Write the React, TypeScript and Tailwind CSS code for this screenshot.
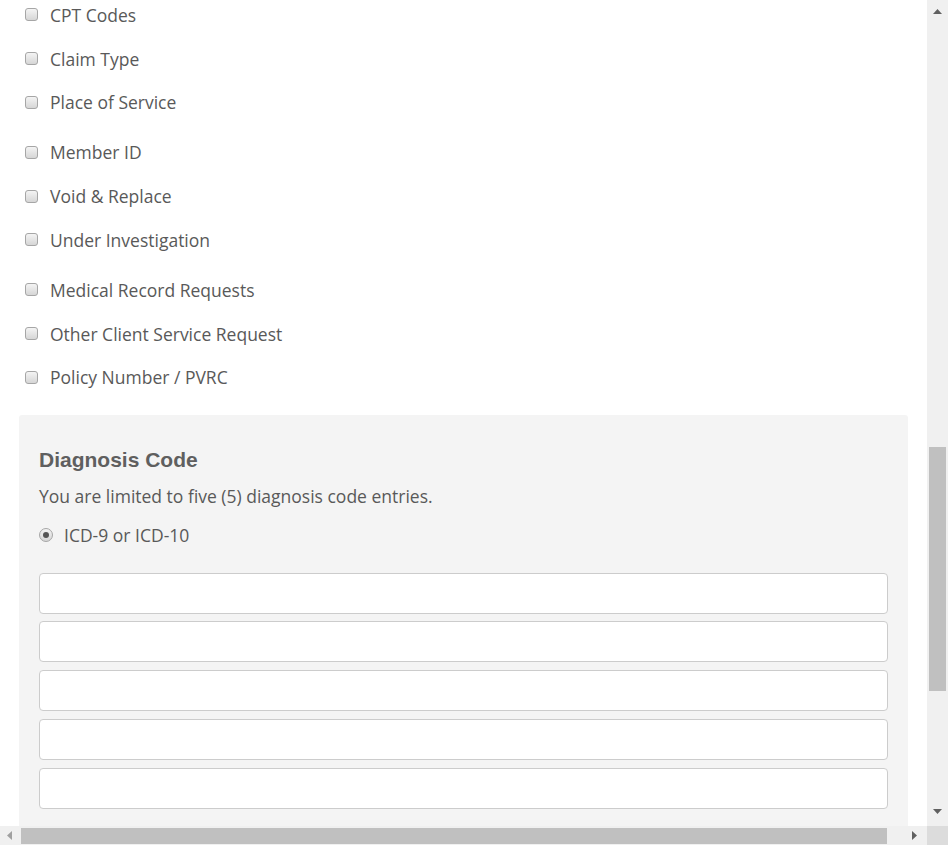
import React from "react";

const groups = [
  ["CPT Codes", "Claim Type", "Place of Service"],
  ["Member ID", "Void & Replace", "Under Investigation"],
  ["Medical Record Requests", "Other Client Service Request", "Policy Number / PVRC"],
];

function Checkbox() {
  return (
    <span className="block w-[13px] h-[13px] rounded-[3px] border border-[#a6a6a6] bg-gradient-to-b from-[#f4f4f4] to-[#d6d6d6] shrink-0" />
  );
}

export default function App() {
  return (
    <div
      className="w-[948px] h-[845px] overflow-hidden flex flex-col bg-white text-[#595959]"
      style={{ fontFamily: '"Open Sans", "Liberation Sans", sans-serif' }}
    >
      <div className="flex h-[826px]">
        <div className="w-[927px] overflow-hidden">
          <div className="mt-[-7px] flex flex-col gap-[6.5px]">
            {groups.map((g, gi) => (
              <div key={gi} className="flex flex-col">
                {g.map((label) => (
                  <div key={label} className="h-[43.7px] flex items-center pl-[25px]">
                    <Checkbox />
                    <span className="ml-[12px] text-[17.5px] leading-[24px]">{label}</span>
                  </div>
                ))}
              </div>
            ))}
          </div>
          <div className="mt-[15.4px] ml-[19px] w-[889px] h-[500px] bg-[#f4f4f4] rounded-t-[3px] pt-[33px] px-[20px]">
            <h2
              className="text-[21px] leading-[24px] font-bold text-[#5f5f5f]"
              style={{ fontFamily: '"Liberation Sans", Arial, sans-serif' }}
            >
              Diagnosis Code
            </h2>
            <p className="mt-[12px] text-[17.5px] leading-[24px]">
              You are limited to five (5) diagnosis code entries.
            </p>
            <div className="mt-[15px] h-[24px] flex items-center">
              <span className="w-[14px] h-[14px] rounded-full border border-[#a6a6a6] bg-gradient-to-b from-[#f4f4f4] to-[#d6d6d6] flex items-center justify-center shrink-0">
                <span className="w-[6px] h-[6px] rounded-full bg-[#555]" />
              </span>
              <span className="ml-[11px] text-[17.5px] leading-[24px]">ICD-9 or ICD-10</span>
            </div>
            <div className="mt-[26px] flex flex-col gap-[7.75px]">
              {[0, 1, 2, 3, 4].map((i) => (
                <div
                  key={i}
                  className="h-[41px] bg-white border border-[#cccccc] rounded-[4px]"
                />
              ))}
            </div>
          </div>
        </div>
        <div className="w-[21px] bg-[#f0f0f0] flex flex-col items-center">
          <div className="h-[20px] flex items-center justify-center pt-[2px]">
            <svg width="9" height="5" viewBox="0 0 9 5">
              <path d="M4.5 0 L9 5 L0 5 Z" fill="#606060" />
            </svg>
          </div>
          <div className="mt-[427px] w-[17px] h-[244px] bg-[#c0c0c0]" />
          <div className="flex-1" />
          <div className="h-[26px] flex items-center justify-center pb-[4px]">
            <svg width="9" height="5" viewBox="0 0 9 5">
              <path d="M0 0 L9 0 L4.5 5 Z" fill="#606060" />
            </svg>
          </div>
        </div>
      </div>
      <div className="flex h-[19px]">
        <div className="w-[927px] bg-[#f0f0f0] flex items-center">
          <div className="w-[21px] flex items-center justify-center pr-[3px]">
            <svg width="5" height="9" viewBox="0 0 5 9">
              <path d="M5 0 L5 9 L0 4.5 Z" fill="#a0a0a0" />
            </svg>
          </div>
          <div className="w-[866px] h-[16px] bg-[#c0c0c0]" />
          <div className="flex-1 flex items-center justify-end pr-[10px]">
            <svg width="5" height="9" viewBox="0 0 5 9">
              <path d="M0 0 L5 4.5 L0 9 Z" fill="#606060" />
            </svg>
          </div>
        </div>
        <div className="w-[21px] bg-[#dcdcdc]" />
      </div>
    </div>
  );
}
